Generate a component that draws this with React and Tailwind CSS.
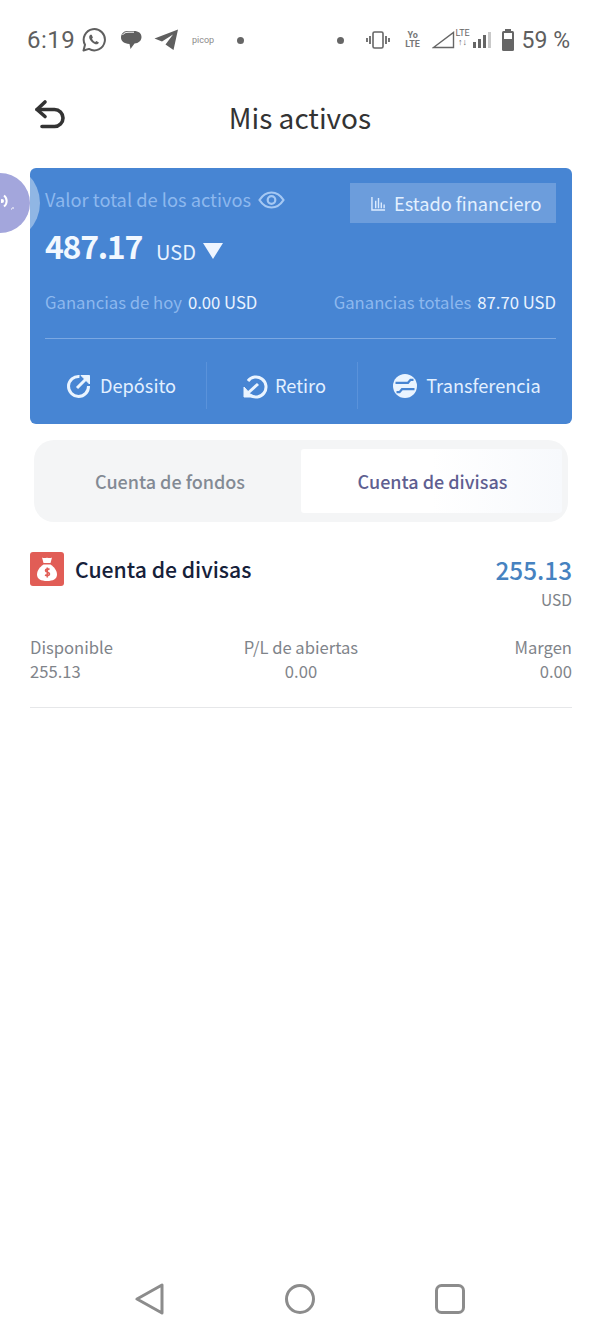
import React from 'react';

const cjk = "font-['Noto_Sans_CJK_SC','Noto_Sans',sans-serif]";

const StatusBar = () => (
    <div className="flex items-center h-[80px] pl-[27px] pr-[30px] text-[#5f5f5f] font-['Roboto',sans-serif]">
        <span className="text-[24px] leading-none w-[46px] tracking-[0.5px]">6:19</span>
        <svg className="ml-[9px]" width="24" height="24" viewBox="0 0 24 24" fill="none" aria-label="whatsapp">
            <path d="M1.5 22.5 3 16.8A10.6 10.6 0 1 1 7 20.9Z" stroke="#5f5f5f" strokeWidth="2" strokeLinejoin="round" />
            <path d="M8.3 6.8c-1.4 1-1.5 2.9-.3 4.900 1.300 2.100 3.300 3.900 5.500 4.500 1.700.4 3-.4 3.400-1.700l-2.500-1.600-1.200 1c-1.300-.5-2.500-1.800-3.200-3.200l.9-1.200-1.200-2.700Z" fill="#5f5f5f" />
        </svg>
        <svg className="ml-[14px]" width="22" height="20" viewBox="0 0 22 20" aria-label="messages">
            <path d="M7 1h7c4.500 0 7.500 2.300 7.500 6s-3 6.300-7 6.500L10.500 19l-1-5C4 13.500 1 11 1 7.500 1 4 3.500 1 7 1Z" fill="#5f5f5f" />
            <path d="M2.500 5C4 2.800 6 2.200 9 2.200h5" stroke="#ffffff" strokeWidth="1" fill="none" />
        </svg>
        <svg className="ml-[12px]" width="25" height="22" viewBox="0 0 25 22" aria-label="telegram">
            <path d="M24 0.500 19.500 21 11.500 15.500 19 5.500 8 12.500 0.500 9.500Z" fill="#5f5f5f" />
        </svg>
        <span className="ml-[12px] w-[24px] text-[9px] leading-none text-[#8b8b8b] text-center">picop</span>
        <span className="ml-[22px] w-[7px] h-[7px] rounded-full bg-[#666666]" />
        <span className="ml-auto w-[7px] h-[7px] rounded-full bg-[#666666]" />
        <svg className="ml-[22px]" width="24" height="18" viewBox="0 0 24 18" fill="none" stroke="#666666" aria-label="vibrate">
            <rect x="7" y="1" width="10" height="16" rx="1.500" strokeWidth="1.600" />
            <path d="M4 5v8M1 7v4M20 5v8M23 7v4" strokeWidth="1.800" />
        </svg>
        <span className="ml-[14px] w-[18px] flex flex-col items-center text-[9px] leading-[9px] font-bold text-[#777777]">
            <span>Yo</span>
            <span>LTE</span>
        </span>
        <svg className="ml-[10px]" width="23" height="18" viewBox="0 0 23 18" fill="none" aria-label="signal">
            <path d="M1.500 16.500 21.500 1.500v15Z" stroke="#666666" strokeWidth="1.400" />
        </svg>
        <span className="w-[16px] -mt-[4px] flex flex-col items-center text-[9px] leading-[9px] text-[#666666]">
            <span>LTE</span>
            <span className="font-bold">↑↓</span>
        </span>
        <svg className="ml-[1px]" width="20" height="18" viewBox="0 0 20 18" aria-label="bars">
            <rect x="1" y="11" width="3" height="6" fill="#666666" />
            <rect x="6" y="8" width="3" height="9" fill="#666666" />
            <rect x="11" y="4" width="3" height="13" fill="#666666" />
            <rect x="16" y="1" width="3" height="16" fill="#c9c9c9" />
        </svg>
        <svg className="ml-[9px]" width="14" height="22" viewBox="0 0 14 22" aria-label="battery">
            <rect x="4" y="0" width="6" height="3" fill="#666666" />
            <rect x="1" y="2" width="12" height="20" rx="1.500" fill="#666666" />
            <rect x="3" y="4" width="8" height="6" fill="#ffffff" />
        </svg>
        <span className="ml-[7px] text-[23px] leading-none">59 %</span>
    </div>
);

const Header = () => (
    <div className="relative flex items-center justify-center h-[76px] pb-[3px]">
        <svg className="absolute left-[34px] top-[19px]" width="34" height="34" viewBox="0 0 34 34" fill="none" stroke="#333333" strokeWidth="3.600" aria-label="back">
            <path d="M11 3 3 10.500l8 7" strokeLinecap="round" strokeLinejoin="round" />
            <path d="M3 10.500h17.500a8.500 8.500 0 0 1 0 17H8" strokeLinecap="round" />
        </svg>
        <h1 className={`${cjk} text-[28px] leading-none font-normal text-[#333333]`}>Mis activos</h1>
    </div>
);

const BalanceCard = () => (
    <div className={`${cjk} mt-[12px] ml-[30px] w-[542px] h-[256px] rounded-[6px] bg-[#4785d3] flex flex-col pl-[15px] pr-[16px]`}>
        <div className="flex justify-between pt-[15px]">
            <div className="flex items-center h-[33px] gap-[7px] text-[18.300px] text-[#8db8ee]">
                <span>Valor total de los activos</span>
                <svg width="27" height="20" viewBox="0 0 27 20" fill="none" stroke="#a5c8f3" strokeWidth="2.200" aria-label="show">
                    <path d="M1.500 10C5 4.500 9 2.500 13.500 2.500S22 4.500 25.500 10C22 15.500 18 17.500 13.500 17.500S5 15.500 1.500 10Z" />
                    <circle cx="13.500" cy="10" r="3.800" />
                </svg>
            </div>
            <button className="flex items-center gap-[8px] w-[206px] h-[40px] pl-[21px] bg-[#6c9ddc] text-[18.200px] text-[#e3f0ff]">
                <svg width="15" height="15" viewBox="0 0 16 16" fill="none" stroke="#dcebff" strokeWidth="1.500" aria-label="chart">
                    <path d="M1 1v14h14M5 13V5M8 13V2M11 13V7M14 13V9" />
                </svg>
                <span className="mt-[1px]">Estado financiero</span>
            </button>
        </div>
        <div className="flex items-center mt-[-2px] h-[48px] text-white">
            <span className="text-[32px] leading-none font-bold tracking-[-1.300px] text-[#f2f8ff]">487.17</span>
            <span className="ml-[14px] mt-[13px] text-[20px] leading-none text-[#e8f2ff]">USD</span>
            <span className="ml-[7px] mt-[11px] w-0 h-0 border-x-[10px] border-x-transparent border-t-[16px] border-t-[#eef5ff]" />
        </div>
        <div className="flex justify-between items-center mt-[21px] h-[26px] text-[16.700px]">
            <div className="flex gap-[6px]">
                <span className="text-[#8db8ee]">Ganancias de hoy</span>
                <span className="text-[#eaf3ff]">0.00 USD</span>
            </div>
            <div className="flex gap-[6px]">
                <span className="text-[#8db8ee]">Ganancias totales</span>
                <span className="text-[#eaf3ff]">87.70 USD</span>
            </div>
        </div>
        <div className="mt-[22px] h-px bg-[#7ba8e2]" />
        <div className="flex items-center h-[47px] mt-[23px] -ml-[15px] -mr-[16px] text-[18.200px] text-[#e3f0ff]">
            <div className="w-[177px] h-full border-r border-[#5a92da] flex items-center justify-center gap-[8px] pl-[6px]">
                <svg width="26" height="26" viewBox="0 0 26 26" fill="none" stroke="#eaf4ff" strokeWidth="3" aria-label="deposit">
                    <path d="M13.500 3.500A10 10 0 1 0 22.500 13" />
                    <path d="M11 15 22 4" />
                    <path d="M15 2.500h8.500V11Z" fill="#eaf4ff" strokeWidth="1" />
                </svg>
                Depósito
            </div>
            <div className="w-[151px] h-full border-r border-[#5a92da] flex items-center justify-center gap-[7px] pl-[4px]">
                <svg width="26" height="26" viewBox="0 0 26 26" fill="none" stroke="#eaf4ff" strokeWidth="3" aria-label="withdraw">
                    <path d="M6 8A10 10 0 1 1 8 22" />
                    <path d="M16 11 6 20" />
                    <path d="M2 14v10h9Z" fill="#eaf4ff" strokeWidth="1" />
                </svg>
                Retiro
            </div>
            <div className="flex-1 h-full flex items-center justify-center gap-[8px] pl-[3px]">
                <svg width="26" height="26" viewBox="0 0 26 26" aria-label="transfer">
                    <circle cx="13" cy="13" r="12" fill="#eaf4ff" />
                    <path d="M3.500 9.800h12.500l2.500-3h3M22.500 16.200H10l-2.500 3h-3" fill="none" stroke="#4785d3" strokeWidth="2.200" />
                </svg>
                Transferencia
            </div>
        </div>
    </div>
);

const Tabs = () => (
    <div className={`${cjk} mt-[16px] ml-[34px] w-[534px] h-[82px] rounded-[20px] bg-[#f4f5f6] flex items-center pl-[1px] pr-[6px]`}>
        <div className="w-[266px] pl-[4px] text-center text-[18px] font-medium text-[#838a94]">Cuenta de fondos</div>
        <div className="flex-1 h-[64px] rounded-[3px] bg-gradient-to-r from-white via-white to-[#f7f9fc] flex items-center justify-center text-[18px] font-medium text-[#5f5f91] pl-[2px]">
            Cuenta de divisas
        </div>
    </div>
);

const Account = () => (
    <div className={`${cjk} mt-[30px] ml-[30px] w-[542px]`}>
        <div className="flex justify-between items-start">
            <div className="flex items-center gap-[11px] h-[34px]">
                <span className="w-[34px] h-[34px] rounded-[3px] bg-[#e15d56] flex items-center justify-center">
                    <svg width="24" height="26" viewBox="0 0 24 26" aria-label="money bag">
                        <path d="M7 1.500c2 1.200 3 .2 5 .2s3 1 5-.2L15.500 7h-7Z" fill="#ffffff" />
                        <path d="M8.500 8.500h7C19.500 11 22 15 22 18.500 22 23 18 25 12 25S2 23 2 18.500C2 15 4.500 11 8.500 8.500Z" fill="#ffffff" />
                        <path d="M14.500 13.500c-1.500-1-4-.7-4 1 0 2 4 1.500 4 3.500 0 1.700-2.500 2-4.500 1M12.300 11.500v10" stroke="#e15d56" strokeWidth="1.600" fill="none" />
                    </svg>
                </span>
                <span className="text-[21.200px] leading-none font-medium text-[#16213a]">Cuenta de divisas</span>
            </div>
            <div className="flex flex-col items-end -mt-[1px]">
                <span className="text-[24.300px] leading-[38px] font-medium text-[#4682c0]">255.13</span>
                <span className="text-[15.500px] leading-[20px] text-[#7d8288]">USD</span>
            </div>
        </div>
        <div className="grid grid-cols-3 mt-[26px] pb-[24px] border-b border-[#e6e7e9] text-[16.600px] leading-[24px] text-[#7f848a]">
            <div>
                <div>Disponible</div>
                <div>255.13</div>
            </div>
            <div className="text-center">
                <div>P/L de abiertas</div>
                <div>0.00</div>
            </div>
            <div className="text-right">
                <div>Margen</div>
                <div>0.00</div>
            </div>
        </div>
    </div>
);

const NavBar = () => (
    <div className="mt-auto h-[80px] flex items-center justify-center gap-[120px]">
        <svg width="30" height="32" viewBox="0 0 30 32" fill="none" stroke="#8c8c8c" strokeWidth="3" strokeLinejoin="round" aria-label="back">
            <path d="M2 16 27 2v28Z" />
        </svg>
        <svg width="30" height="30" viewBox="0 0 30 30" fill="none" stroke="#8c8c8c" strokeWidth="3" aria-label="home">
            <circle cx="15" cy="15" r="13.500" />
        </svg>
        <svg width="30" height="30" viewBox="0 0 30 30" fill="none" stroke="#8c8c8c" strokeWidth="3" aria-label="recents">
            <rect x="1.500" y="1.500" width="27" height="27" rx="5" />
        </svg>
    </div>
);

const App = () => {
    return (
        <div className="relative w-[600px] h-[1339px] bg-white flex flex-col overflow-hidden">
            <StatusBar />
            <Header />
            <BalanceCard />
            <Tabs />
            <Account />
            <NavBar />
            {/* floating bubble over the card edge */}
            <div className="absolute left-[-40px] top-[163px] w-[80px] h-[80px] rounded-full bg-[#ffffff]/40 flex items-center justify-center">
                <div className="w-[60px] h-[60px] rounded-full bg-[#a3a6dc] flex items-center pl-[31px]">
                    <svg className="-mt-[2px]" width="14" height="22" viewBox="0 0 14 22" fill="none" stroke="#ffffff" strokeWidth="2" aria-label="sound">
                        <circle cx="1" cy="10" r="2" fill="#ffffff" stroke="none" />
                        <path d="M3 4.500a7 7 0 0 1 0 11" />
                        <path d="M10 18h1M12 18v-2" strokeWidth="1" />
                    </svg>
                </div>
            </div>
        </div>
    );
};

export default App;
